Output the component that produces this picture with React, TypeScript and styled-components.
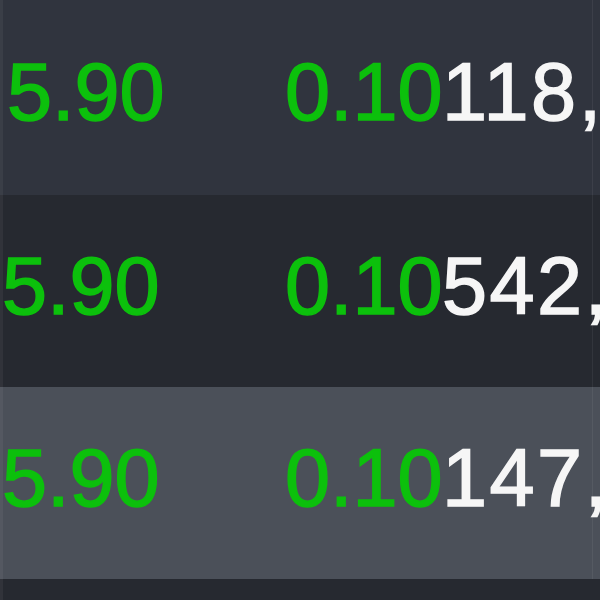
import React from "react";
import styled, { createGlobalStyle } from "styled-components";

const rows = [
  { price: "5.90", change: "0.10", volume: "118,306", tone: "mid", shift: 5, height: 195 },
  { price: "5.90", change: "0.10", volume: "542,810", tone: "dark", shift: 0, height: 192 },
  { price: "5.90", change: "0.10", volume: "147,225", tone: "hover", shift: 0, height: 192 },
];

const tones = {
  mid: "#30343e",
  dark: "#262930",
  hover: "#4b5059",
};

const App = () => {
  return (
    <>
      <GlobalStyle />
      <Table>
        {rows.map((row, index) => (
          <Row key={index} tone={row.tone} shift={row.shift} h={row.height}>
            <Price>{row.price}</Price>
            <Change>{row.change}</Change>
            <Volume>{row.volume}</Volume>
            <Spare />
          </Row>
        ))}
        <Filler />
      </Table>
    </>
  );
};
export default App;

const GlobalStyle = createGlobalStyle`
  html, body {
    margin: 0;
    padding: 0;
    width: 600px;
    height: 600px;
    overflow: hidden;
    background: #262930;
  }
`;

const Table = styled.div`
  position: relative;
  width: 600px;
  height: 600px;
  display: flex;
  flex-direction: column;
  overflow: hidden;
  font-family: "Liberation Sans", Arial, sans-serif;
  font-size: 81px;

  &::after {
    content: "";
    position: absolute;
    left: 0;
    top: 0;
    bottom: 0;
    width: 3px;
    background: rgba(255, 255, 255, 0.05);
  }
`;

const Row = styled.div`
  flex: none;
  height: ${(p) => p.h}px;
  display: grid;
  grid-template-columns: ${(p) => 283 - p.shift}px 155px 152px 1fr;
  align-items: center;
  padding-left: ${(p) => 2 + p.shift}px;
  padding-bottom: 10px;
  box-sizing: border-box;
  background-color: ${(p) => tones[p.tone]};
`;

const Cell = styled.div`
  white-space: nowrap;
  line-height: 1;
  -webkit-text-stroke: 1.5px currentColor;
  filter: blur(0.6px);
`;

const Price = styled(Cell)`
  color: #0cc00c;
`;

const Change = styled(Cell)`
  color: #0cc00c;
`;

const Volume = styled(Cell)`
  color: #f6f6f6;
  padding-left: 2px;
  letter-spacing: 2.5px;
  position: relative;
  z-index: 1;
`;

const Spare = styled.div`
  align-self: stretch;
  margin-bottom: -10px;
  border-left: 1px solid rgba(255, 255, 255, 0.06);
`;

const Filler = styled.div`
  flex: 1;
  background: #262930;
`;
